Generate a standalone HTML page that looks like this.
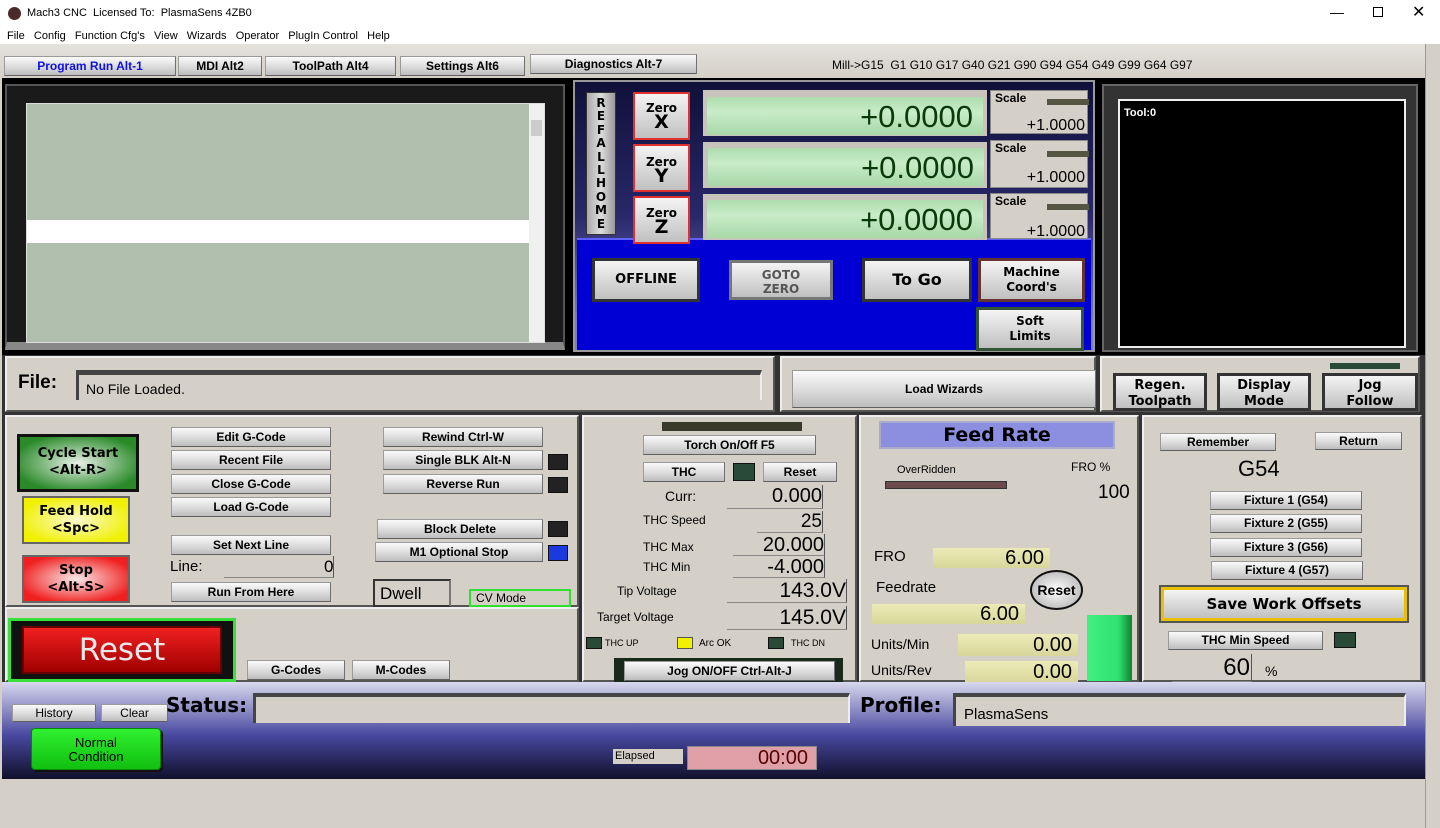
<!DOCTYPE html>
<html><head><meta charset="utf-8"><style>
*{margin:0;padding:0;box-sizing:border-box}
body{width:1440px;height:828px;background:#d4d0c8;font-family:"Liberation Sans",Arial,sans-serif;position:relative;overflow:hidden;font-size:12px}
div,span{position:absolute}
.b{background:linear-gradient(#fafafa,#d8d8d8 60%,#bdbdbd);border:1px solid #9a9a9a;border-right-color:#707070;border-bottom-color:#606060;text-align:center;font-weight:bold;font-size:12px;color:#000;line-height:18px}
.pn{background:#d4d0c8;border:2px solid #555;border-top-color:#eee;border-left-color:#eee}
.dro{background:linear-gradient(#aedcae,#c8ecc8 40%,#a8d8a8);text-align:right;font-size:31px;color:#0a3a0a;padding-right:10px;line-height:40px}
.sc{background:#d4d0c8;border:1px solid #888}
.big{background:linear-gradient(#f4f4f4,#c0c0c0);border:3px solid #333;text-align:center;font-weight:bold;font-family:"DejaVu Sans",sans-serif}
.fld{border-bottom:1px solid #888;border-right:1px solid #555;text-align:right}
.led{background:#2a4a38;border:1px solid #111}
.yl{background:linear-gradient(#ecebb8,#d8d69a);text-align:right;font-size:20px;padding-right:6px}
</style></head><body>
<div style="left:0;top:0;width:1440px;height:28px;background:#fff"></div>
<div style="left:8px;top:7px;width:13px;height:13px;border-radius:50%;background:#4a2a2a"></div>
<div style="left:27px;top:7px;font-size:11px">Mach3 CNC&nbsp; Licensed To:&nbsp; PlasmaSens 4ZB0</div>
<div style="left:1330px;top:4px;font-size:14px">&#8212;</div>
<div style="left:1373px;top:7px;width:10px;height:10px;border:1px solid #000"></div>
<div style="left:1412px;top:2px;font-size:16px">&#10005;</div>
<div style="left:0;top:28px;width:1440px;height:16px;background:#fff"></div>
<div style="left:7px;top:30px;font-size:11px">File&nbsp;&nbsp; Config&nbsp;&nbsp; Function Cfg's&nbsp;&nbsp; View&nbsp;&nbsp; Wizards&nbsp;&nbsp; Operator&nbsp;&nbsp; PlugIn Control&nbsp;&nbsp; Help</div>
<div style="left:0;top:44px;width:1440px;height:34px;background:linear-gradient(#e4e2dc,#d4d0c8)"></div>
<div class="b" style="left:4px;top:56px;width:172px;height:20px;color:#1010e0">Program Run Alt-1</div>
<div class="b" style="left:178px;top:56px;width:84px;height:20px">MDI Alt2</div>
<div class="b" style="left:265px;top:56px;width:131px;height:20px">ToolPath Alt4</div>
<div class="b" style="left:400px;top:56px;width:125px;height:20px">Settings Alt6</div>
<div class="b" style="left:530px;top:54px;width:167px;height:20px">Diagnostics Alt-7</div>
<div style="left:832px;top:58px;font-size:12px">Mill-&gt;G15&nbsp; G1 G10 G17 G40 G21 G90 G94 G54 G49 G99 G64 G97</div>
<div style="left:1425px;top:44px;width:15px;height:784px;background:#d4d0c8;border-left:1px solid #999"></div>
<div style="left:2px;top:78px;width:1423px;height:278px;background:#000"></div>
<div style="left:5px;top:84px;width:560px;height:266px;background:#1a1a1a;border:2px solid #555;border-bottom:8px solid #888"></div>
<div style="left:26px;top:103px;width:519px;height:240px;background:#b0bfae;border:1px solid #ddd"></div>
<div style="left:27px;top:220px;width:502px;height:23px;background:#fff"></div>
<div style="left:529px;top:104px;width:15px;height:238px;background:#f0f0f0"></div>
<div style="left:531px;top:120px;width:11px;height:16px;background:#ccc"></div>
<div style="left:573px;top:80px;width:522px;height:272px;background:linear-gradient(#10103a,#28286a 50%,#7a7ac0 90%);border:2px solid #999"></div>
<div style="left:577px;top:238px;width:514px;height:112px;background:#0000d4;border-top:2px solid #6060ff"></div>
<div style="left:586px;top:92px;width:30px;height:143px;background:linear-gradient(90deg,#aaa,#ddd,#999);border:1px solid #333;font-weight:bold;font-size:12px;text-align:center;line-height:13.4px;padding-top:4px;font-family:'DejaVu Sans',sans-serif">R<br>E<br>F<br>A<br>L<br>L<br>H<br>O<br>M<br>E</div>
<div class="big" style="left:633px;top:92px;width:57px;height:48px;border:2px solid #e03030;font-size:12px;line-height:14px;padding-top:7px">Zero<br><span style="position:static;font-size:19px">X</span></div>
<div class="big" style="left:633px;top:144px;width:57px;height:48px;border:2px solid #e03030;font-size:12px;line-height:14px;padding-top:9px">Zero<br><span style="position:static;font-size:19px">Y</span></div>
<div class="big" style="left:633px;top:196px;width:57px;height:48px;border:2px solid #e03030;font-size:12px;line-height:14px;padding-top:8px">Zero<br><span style="position:static;font-size:19px">Z</span></div>
<div style="left:703px;top:90px;width:284px;height:46px;background:#c8c4bc"></div>
<div class="dro" style="left:707px;top:97px;width:276px;height:38px">+0.0000</div>
<div style="left:703px;top:142px;width:284px;height:46px;background:#c8c4bc"></div>
<div class="dro" style="left:708px;top:148px;width:276px;height:38px">+0.0000</div>
<div style="left:703px;top:194px;width:284px;height:46px;background:#c8c4bc"></div>
<div class="dro" style="left:707px;top:200px;width:276px;height:38px">+0.0000</div>
<div class="sc" style="left:990px;top:90px;width:98px;height:44px"><span style="left:4px;top:0;font-size:12px;font-weight:bold">Scale</span><span style="left:56px;top:8px;width:42px;height:6px;background:#554"></span><span style="right:2px;top:26px;font-size:16px">+1.0000</span></div>
<div class="sc" style="left:990px;top:140px;width:98px;height:48px"><span style="left:4px;top:0;font-size:12px;font-weight:bold">Scale</span><span style="left:56px;top:10px;width:42px;height:6px;background:#554"></span><span style="right:2px;top:28px;font-size:16px">+1.0000</span></div>
<div class="sc" style="left:990px;top:193px;width:98px;height:46px"><span style="left:4px;top:0;font-size:12px;font-weight:bold">Scale</span><span style="left:56px;top:10px;width:42px;height:6px;background:#554"></span><span style="right:2px;top:29px;font-size:16px">+1.0000</span></div>
<div class="big" style="left:592px;top:258px;width:108px;height:44px;font-size:13px;line-height:38px">OFFLINE</div>
<div class="big" style="left:729px;top:260px;width:104px;height:40px;font-size:12px;line-height:14px;padding-top:5px;color:#555;border-color:#777">GOTO<br>ZERO</div>
<div class="big" style="left:862px;top:258px;width:110px;height:44px;font-size:16px;line-height:38px">To Go</div>
<div class="big" style="left:978px;top:258px;width:107px;height:44px;font-size:12px;line-height:15px;padding-top:4px;border-color:#633">Machine<br>Coord's</div>
<div class="big" style="left:976px;top:307px;width:108px;height:44px;font-size:12px;line-height:15px;padding-top:4px;border-color:#353">Soft<br>Limits</div>
<div style="left:1102px;top:84px;width:316px;height:268px;background:#333;border:2px solid #666"></div>
<div style="left:1118px;top:99px;width:288px;height:249px;background:#000;border:2px solid #eee"></div>
<div style="left:1124px;top:107px;color:#fff;font-size:11px;font-weight:bold">Tool:0</div>
<div style="left:2px;top:355px;width:1423px;height:327px;background:#333"></div>
<div class="pn" style="left:5px;top:356px;width:770px;height:56px"></div>
<div style="left:18px;top:372px;font-size:19px;font-weight:bold">File:</div>
<div style="left:76px;top:370px;width:686px;height:30px;border-top:5px solid #444;border-left:3px solid #444;border-right:2px solid #eee;background:#d4d0c8"></div>
<div style="left:86px;top:381px;font-size:14px">No File Loaded.</div>
<div class="pn" style="left:780px;top:356px;width:316px;height:56px"></div>
<div class="b" style="left:792px;top:370px;width:304px;height:38px;line-height:36px;font-size:12px">Load Wizards</div>
<div class="pn" style="left:1100px;top:356px;width:320px;height:56px"></div>
<div style="left:1330px;top:363px;width:70px;height:6px;background:#2a4a38"></div>
<div class="big" style="left:1113px;top:373px;width:94px;height:38px;font-size:13px;line-height:16px;padding-top:2px">Regen.<br>Toolpath</div>
<div class="big" style="left:1217px;top:373px;width:94px;height:38px;font-size:13px;line-height:16px;padding-top:2px">Display<br>Mode</div>
<div class="big" style="left:1322px;top:373px;width:96px;height:38px;font-size:13px;line-height:16px;padding-top:2px">Jog<br>Follow</div>
<div class="pn" style="left:5px;top:415px;width:574px;height:192px"></div>
<div class="big" style="left:17px;top:434px;width:122px;height:58px;background:radial-gradient(#e8f0e8,#2a8a2a 80%);border:3px solid #111;font-size:13px;line-height:17px;padding-top:8px">Cycle Start<br>&lt;Alt-R&gt;</div>
<div class="big" style="left:22px;top:496px;width:108px;height:48px;background:radial-gradient(#fafad0,#f0f000 80%);border:2px solid #666;font-size:13px;line-height:17px;padding-top:5px">Feed Hold<br>&lt;Spc&gt;</div>
<div class="big" style="left:22px;top:555px;width:108px;height:48px;background:radial-gradient(#fae8e8,#f02020 80%);border:2px solid #666;font-size:13px;line-height:17px;padding-top:5px">Stop<br>&lt;Alt-S&gt;</div>
<div class="b" style="left:171px;top:427px;width:160px;height:20px">Edit G-Code</div>
<div class="b" style="left:171px;top:450px;width:160px;height:20px">Recent File</div>
<div class="b" style="left:171px;top:474px;width:160px;height:20px">Close G-Code</div>
<div class="b" style="left:171px;top:497px;width:160px;height:20px">Load G-Code</div>
<div class="b" style="left:171px;top:535px;width:160px;height:20px">Set Next Line</div>
<div style="left:170px;top:558px;font-size:15px">Line:</div>
<div class="fld" style="left:224px;top:556px;width:110px;height:22px"></div>
<div style="left:324px;top:557px;font-size:17px">0</div>
<div class="b" style="left:171px;top:582px;width:160px;height:20px">Run From Here</div>
<div class="b" style="left:383px;top:427px;width:160px;height:20px">Rewind Ctrl-W</div>
<div class="b" style="left:383px;top:450px;width:160px;height:20px">Single BLK Alt-N</div>
<div class="b" style="left:383px;top:474px;width:160px;height:20px">Reverse Run</div>
<div class="b" style="left:377px;top:519px;width:166px;height:20px">Block Delete</div>
<div class="b" style="left:375px;top:542px;width:168px;height:20px">M1 Optional Stop</div>
<div class="led" style="left:548px;top:454px;width:20px;height:16px;background:#222"></div>
<div class="led" style="left:548px;top:477px;width:20px;height:16px;background:#222"></div>
<div class="led" style="left:548px;top:521px;width:20px;height:16px;background:#222"></div>
<div class="led" style="left:548px;top:545px;width:20px;height:16px;background:#1a3adf"></div>
<div style="left:373px;top:579px;width:78px;height:28px;border:2px solid #333;border-right-color:#777;font-size:17px;padding:3px 5px">Dwell</div>
<div style="left:469px;top:589px;width:102px;height:18px;border:2px solid #30e030;font-size:12px;padding-left:5px;line-height:14px">CV Mode</div>
<div class="pn" style="left:5px;top:607px;width:574px;height:75px"></div>
<div style="left:8px;top:618px;width:228px;height:64px;background:#111;border:3px solid #3ae03a"></div>
<div style="left:22px;top:626px;width:200px;height:48px;background:linear-gradient(#f02020,#a00000);border:2px solid #600;color:#e8e8e8;font-size:31px;text-align:center;line-height:44px;font-family:'DejaVu Sans',sans-serif">Reset</div>
<div class="b" style="left:247px;top:660px;width:98px;height:20px">G-Codes</div>
<div class="b" style="left:352px;top:660px;width:98px;height:20px">M-Codes</div>
<div class="pn" style="left:582px;top:415px;width:275px;height:267px"></div>
<div style="left:662px;top:422px;width:140px;height:9px;background:#3a3a2a"></div>
<div class="b" style="left:643px;top:435px;width:173px;height:20px">Torch On/Off F5</div>
<div class="b" style="left:643px;top:462px;width:82px;height:20px">THC</div>
<div class="led" style="left:733px;top:463px;width:22px;height:18px"></div>
<div class="b" style="left:763px;top:462px;width:74px;height:20px">Reset</div>
<div style="left:665px;top:488px;font-size:14px">Curr:</div>
<div class="fld" style="left:727px;top:485px;width:96px;height:24px;font-size:20px">0.000</div>
<div style="left:643px;top:513px;font-size:12px">THC Speed</div>
<div class="fld" style="left:757px;top:511px;width:66px;height:22px;font-size:19px">25</div>
<div style="left:643px;top:540px;font-size:12px">THC Max</div>
<div class="fld" style="left:733px;top:534px;width:92px;height:22px;font-size:20px">20.000</div>
<div style="left:643px;top:560px;font-size:12px">THC Min</div>
<div class="fld" style="left:733px;top:556px;width:92px;height:22px;font-size:20px">-4.000</div>
<div style="left:617px;top:584px;font-size:12px">Tip Voltage</div>
<div class="fld" style="left:727px;top:579px;width:120px;height:24px;font-size:21px">143.0V</div>
<div style="left:597px;top:610px;font-size:12px">Target Voltage</div>
<div class="fld" style="left:727px;top:606px;width:120px;height:24px;font-size:21px">145.0V</div>
<div class="led" style="left:586px;top:637px;width:16px;height:12px"></div><div style="left:605px;top:638px;font-size:9px">THC UP</div>
<div style="left:677px;top:637px;width:16px;height:12px;background:#f0f000;border:1px solid #555"></div><div style="left:699px;top:638px;font-size:10px">Arc OK</div>
<div class="led" style="left:768px;top:637px;width:16px;height:12px"></div><div style="left:791px;top:638px;font-size:9px">THC DN</div>
<div style="left:614px;top:658px;width:229px;height:26px;background:#1a2a1a"></div>
<div class="b" style="left:624px;top:661px;width:211px;height:20px">Jog ON/OFF Ctrl-Alt-J</div>
<div class="pn" style="left:859px;top:415px;width:280px;height:267px"></div>
<div style="left:879px;top:421px;width:236px;height:28px;background:#8c8ee0;border:2px solid #aac;font-size:19px;font-weight:bold;text-align:center;line-height:24px;font-family:'DejaVu Sans',sans-serif">Feed Rate</div>
<div style="left:897px;top:464px;font-size:11px">OverRidden</div>
<div style="left:885px;top:481px;width:122px;height:8px;background:#6a4a4a;border:1px solid #333"></div>
<div style="left:1071px;top:460px;font-size:12px">FRO %</div>
<div style="left:1098px;top:482px;font-size:19px">100</div>
<div style="left:874px;top:548px;font-size:15px">FRO</div>
<div class="yl" style="left:933px;top:548px;width:117px;height:20px;line-height:20px">6.00</div>
<div style="left:876px;top:579px;font-size:15px">Feedrate</div>
<div style="left:1030px;top:570px;width:53px;height:40px;border-radius:50%;background:radial-gradient(#fff,#aaa);border:2px solid #111;font-weight:bold;font-size:14px;text-align:center;line-height:36px">Reset</div>
<div class="yl" style="left:872px;top:604px;width:153px;height:20px;line-height:20px">6.00</div>
<div style="left:871px;top:636px;font-size:14px">Units/Min</div>
<div class="yl" style="left:958px;top:634px;width:120px;height:22px;line-height:22px">0.00</div>
<div style="left:871px;top:662px;font-size:14px">Units/Rev</div>
<div class="yl" style="left:965px;top:661px;width:113px;height:22px;line-height:22px">0.00</div>
<div style="left:1087px;top:615px;width:45px;height:66px;background:linear-gradient(90deg,#40f080,#30e070 70%,#108030)"></div>
<div class="pn" style="left:1142px;top:415px;width:280px;height:267px"></div>
<div class="b" style="left:1160px;top:433px;width:116px;height:18px;line-height:16px">Remember</div>
<div class="b" style="left:1315px;top:432px;width:87px;height:18px;line-height:16px">Return</div>
<div style="left:1238px;top:456px;font-size:22px">G54</div>
<div class="b" style="left:1210px;top:491px;width:152px;height:19px;line-height:17px">Fixture 1 (G54)</div>
<div class="b" style="left:1210px;top:514px;width:152px;height:19px;line-height:17px">Fixture 2 (G55)</div>
<div class="b" style="left:1210px;top:538px;width:152px;height:19px;line-height:17px">Fixture 3 (G56)</div>
<div class="b" style="left:1211px;top:561px;width:152px;height:19px;line-height:17px">Fixture 4 (G57)</div>
<div class="big" style="left:1161px;top:587px;width:246px;height:34px;border:3px solid #e8c000;box-shadow:0 0 0 2px #555;font-size:15px;line-height:28px">Save Work Offsets</div>
<div class="b" style="left:1168px;top:631px;width:155px;height:19px;line-height:17px">THC Min Speed</div>
<div class="led" style="left:1334px;top:632px;width:22px;height:16px"></div>
<div class="fld" style="left:1172px;top:654px;width:80px;height:28px;font-size:24px;padding-right:1px">60</div>
<div style="left:1265px;top:663px;font-size:14px">%</div>
<div style="left:2px;top:682px;width:1423px;height:97px;background:linear-gradient(#d8d8ee,#b0b0d8 15%,#4848a0 55%,#10102a)"></div>
<div class="b" style="left:12px;top:704px;width:84px;height:18px;font-weight:normal;font-size:12px;line-height:16px">History</div>
<div class="b" style="left:101px;top:704px;width:67px;height:18px;font-weight:normal;font-size:12px;line-height:16px">Clear</div>
<div style="left:166px;top:693px;font-size:20px;font-weight:bold;font-family:'DejaVu Sans',sans-serif">Status:</div>
<div style="left:253px;top:693px;width:597px;height:30px;background:#d4d0c8;border-top:4px solid #444;border-left:3px solid #444;border-right:2px solid #eee"></div>
<div style="left:860px;top:693px;font-size:20px;font-weight:bold;font-family:'DejaVu Sans',sans-serif">Profile:</div>
<div style="left:953px;top:693px;width:453px;height:33px;background:#d4d0c8;border-top:4px solid #444;border-left:3px solid #444;border-right:2px solid #eee"></div>
<div style="left:964px;top:706px;font-size:15px">PlasmaSens</div>
<div style="left:31px;top:728px;width:130px;height:42px;background:linear-gradient(#30f030,#10c010);border:1px solid #080;box-shadow:2px 2px 0 #111;border-radius:4px;text-align:center;font-size:13px;line-height:14px;padding-top:7px">Normal<br>Condition</div>
<div style="left:613px;top:749px;width:70px;height:15px;background:#d4d0c8;font-size:11px;line-height:14px;padding-left:2px">Elapsed</div>
<div style="left:687px;top:746px;width:130px;height:24px;background:#e0a0a8;border:1px solid #888;text-align:right;font-size:20px;color:#500;padding-right:8px;line-height:22px">00:00</div>
</body></html>
